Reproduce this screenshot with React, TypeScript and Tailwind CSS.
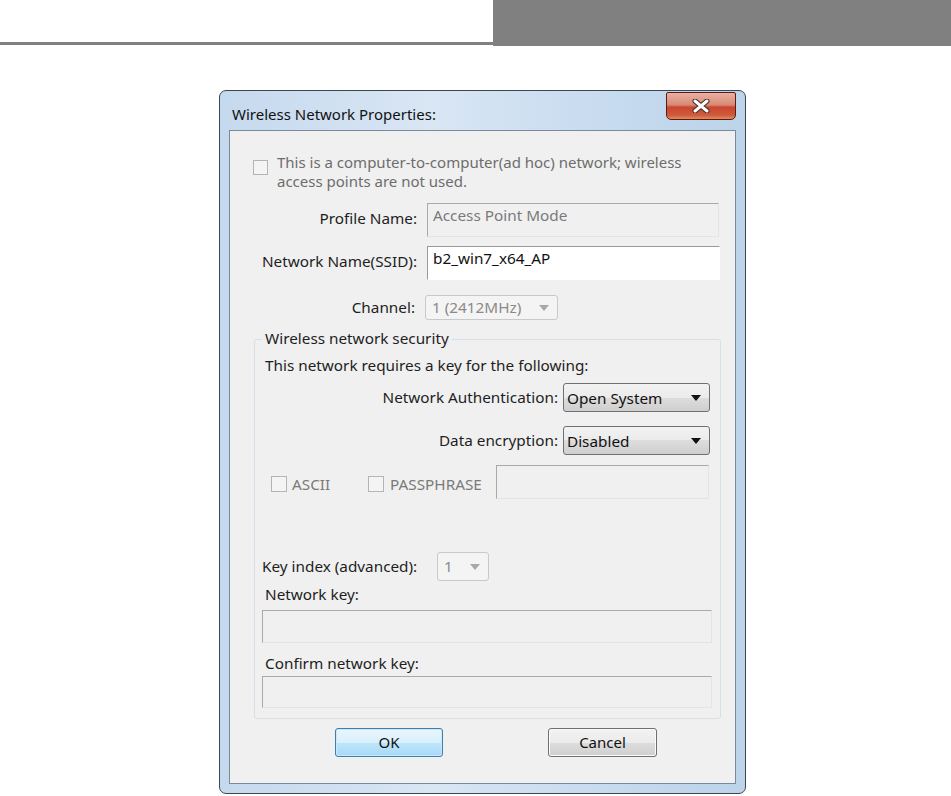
import React from "react";

const font = { fontFamily: '"Noto Sans", "Open Sans", Arial, sans-serif' };

const Check = ({ className = "" }: { className?: string }) => (
  <span
    className={`block shrink-0 border border-[#b4b4b4] bg-[#f4f4f4] ${className}`}
  />
);

const DisabledBox = ({ className = "", text = "" }: { className?: string; text?: string }) => (
  <div
    className={`border border-t-[#a9a9a9] border-l-[#a9a9a9] border-r-[#e4e4e4] border-b-[#e4e4e4] bg-[#f0f0f0] px-[5px] leading-[22px] text-[#7a7a7a] ${className}`}
  >
    {text}
  </div>
);

const ArrowDown = ({ color }: { color: string }) => (
  <svg width="10" height="6" viewBox="0 0 10 6">
    <path d="M0 0 L10 0 L5 6 Z" fill={color} />
  </svg>
);

const DisabledSelect = ({ text, className = "" }: { text: string; className?: string }) => (
  <div
    className={`flex items-center justify-between rounded-[3px] border border-[#c9c9c9] bg-[#f4f4f4] pl-[6px] pr-[8px] text-[#8a8a8a] ${className}`}
  >
    <span>{text}</span>
    <ArrowDown color="#a8a8a8" />
  </div>
);

const Select = ({ text }: { text: string }) => (
  <div className="flex h-[29px] w-[147px] items-center justify-between rounded-[3px] border border-[#707070] bg-[linear-gradient(#f2f2f2_0%,#ebebeb_50%,#dddddd_50%,#cfcfcf_100%)] pl-[3px] pr-[8px] text-[#111]">
    <span className="pt-[2px]">{text}</span>
    <ArrowDown color="#111" />
  </div>
);

export default function App() {
  return (
    <div className="min-h-[796px] w-[951px] bg-white" style={font}>
      {/* top page strip */}
      <div className="flex h-[46px]">
        <div className="flex w-[493px] flex-col justify-end pb-[1px]">
          <div className="h-[3px] bg-[#808080]" />
        </div>
        <div className="flex-1 bg-[#808080]" />
      </div>

      {/* dialog window */}
      <div className="ml-[219px] mt-[44px] h-[704px] w-[527px] rounded-[7px] border border-[#3d4650] bg-[linear-gradient(90deg,#c5d9ee,#d9e6f4_40%,#c9dcf0_70%,#bcd3ea)] px-[9px] pb-[10px]">
        {/* title bar */}
        <div className="flex h-[39px] items-start justify-between">
          <div className="pl-[3px] pt-[13px] text-[15px] leading-[20px] text-[#111]">
            Wireless Network Properties:
          </div>
          <div className="mt-[1px] flex h-[28px] w-[70px] items-center justify-center rounded-b-[5px] rounded-t-[2px] border border-[#5a1d12] bg-[linear-gradient(#eab0a2_0%,#d98a76_45%,#c9462f_55%,#cf5a3c_85%,#e58a5c_100%)]">
            <svg width="18" height="14" viewBox="0 0 18 14">
              <path d="M3 2 L15 12 M15 2 L3 12" stroke="#3a2a28" strokeWidth="5" strokeLinecap="round" />
              <path d="M3 2 L15 12 M15 2 L3 12" stroke="#ffffff" strokeWidth="3" strokeLinecap="round" />
            </svg>
          </div>
        </div>

        {/* client area */}
        <div className="h-[654px] border border-[#7a8a9b] bg-[#f0f0f0] text-[15.3px] text-[#1e1e1e]">
          {/* ad hoc checkbox */}
          <div className="ml-[23px] mt-[22px] flex">
            <Check className="mt-[7px] h-[15px] w-[15px]" />
            <div className="ml-[9px] text-[15px] leading-[19px] text-[#6d6d6d]">
              This is a computer-to-computer(ad hoc) network; wireless
              <br />
              access points are not used.
            </div>
          </div>

          {/* profile name */}
          <div className="mt-[12px] flex h-[34px]">
            <div className="w-[187px] pt-[4px] text-right">Profile Name:</div>
            <DisabledBox className="ml-[10px] w-[292px]" text="Access Point Mode" />
          </div>

          {/* ssid */}
          <div className="mt-[9px] flex h-[34px]">
            <div className="w-[187px] pt-[4px] text-right">Network Name(SSID):</div>
            <div className="ml-[10px] w-[293px] border border-t-[#9a9a9a] border-l-[#9a9a9a] border-r-[#ffffff] border-b-[#ffffff] bg-white px-[5px] leading-[22px] text-[#111]">
              b2_win7_x64_AP
            </div>
          </div>

          {/* channel */}
          <div className="mt-[15px] flex h-[25px] items-center">
            <div className="w-[185px] text-right">Channel:</div>
            <DisabledSelect className="ml-[10px] h-[25px] w-[133px]" text="1 (2412MHz)" />
          </div>

          {/* security group */}
          <div className="relative ml-[24px] mt-[19px] h-[380px] w-[467px] rounded-[3px] border border-[#d5dfe5]">
            <span className="absolute left-[7px] top-[-11px] bg-[#f0f0f0] px-[3px] leading-[18px]">
              Wireless network security
            </span>

            <div className="ml-[10px] mt-[16px] leading-[18px]">
              This network requires a key for the following:
            </div>

            <div className="mt-[9px] flex items-center justify-end gap-[5px] pr-[10px]">
              <span>Network Authentication:</span>
              <Select text="Open System" />
            </div>

            <div className="mt-[14px] flex items-center justify-end gap-[5px] pr-[10px]">
              <span>Data encryption:</span>
              <Select text="Disabled" />
            </div>

            <div className="mt-[10px] flex h-[34px] items-center">
              <div className="flex w-[113px] items-center pl-[16px]">
                <Check className="mt-[4px] h-[16px] w-[16px]" />
                <span className="ml-[5px] mt-[4px] text-[#7a7a7a]">ASCII</span>
              </div>
              <div className="flex w-[128px] items-center">
                <Check className="mt-[4px] h-[16px] w-[16px]" />
                <span className="ml-[6px] mt-[4px] text-[#7a7a7a]">PASSPHRASE</span>
              </div>
              <DisabledBox className="h-[34px] w-[213px]" />
            </div>

            <div className="mt-[53px] flex h-[29px] items-center">
              <span className="ml-[7px] w-[166px]">Key index (advanced):</span>
              <DisabledSelect className="ml-[9px] h-[29px] w-[52px]" text="1" />
            </div>

            <div className="ml-[10px] mt-[4px] leading-[18px]">Network key:</div>
            <DisabledBox className="ml-[7px] mt-[7px] h-[33px] w-[450px]" />

            <div className="ml-[10px] mt-[11px] leading-[18px]">Confirm network key:</div>
            <DisabledBox className="ml-[7px] mt-[4px] h-[32px] w-[450px]" />
          </div>

          {/* buttons */}
          <div className="mt-[9px] flex h-[29px]">
            <button className="ml-[105px] h-[29px] w-[108px] rounded-[3px] border border-[#3c7fb1] bg-[linear-gradient(#eaf6fd_0%,#d9f0fc_50%,#bee6fd_50%,#a7d9f5_100%)] text-[15px] text-[#111] shadow-[inset_0_0_0_1px_#cbe8f8]">
              OK
            </button>
            <button className="ml-[105px] h-[29px] w-[109px] rounded-[3px] border border-[#707070] bg-[linear-gradient(#f2f2f2_0%,#ebebeb_50%,#dddddd_50%,#cfcfcf_100%)] text-[15px] text-[#111] shadow-[inset_0_0_0_1px_#fbfbfb]">
              Cancel
            </button>
          </div>
        </div>
      </div>
    </div>
  );
}
